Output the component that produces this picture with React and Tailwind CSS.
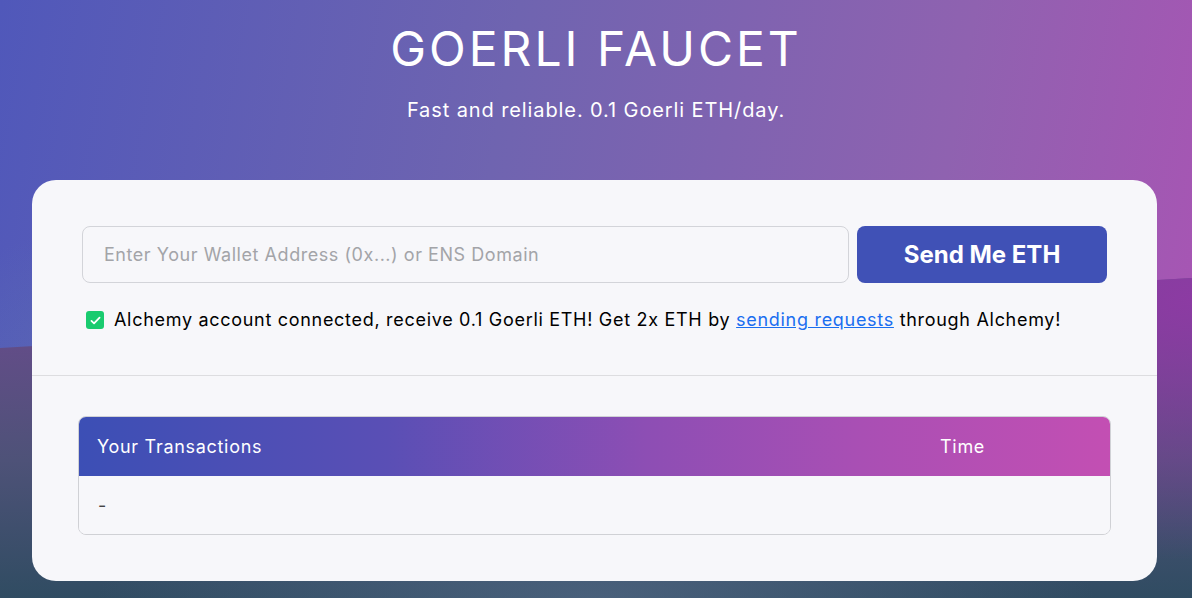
import React, { useState } from 'react';

const font = { fontFamily: 'Inter, "Noto Sans", Arial, sans-serif' };

const CheckIcon = () => (
  <span className="flex h-[18px] w-[18px] items-center justify-center rounded-[3px] bg-[#19cb6f]">
    <svg viewBox="0 0 16 16" className="h-[13px] w-[13px]" fill="none" stroke="white" strokeWidth="2.2" strokeLinecap="round" strokeLinejoin="round">
      <path d="M3 8.5l3.2 3L13 4.5" />
    </svg>
  </span>
);

const App = () => {
  const [address, setAddress] = useState('');

  return (
    <div
      className="relative min-h-screen overflow-hidden bg-[linear-gradient(100deg,#5058ba_0%,#6f64b0_40%,#8f62b0_75%,#ab53b4_100%)]"
      style={font}
    >
      {/* soft lighter glow behind the header */}
      <div className="pointer-events-none absolute inset-0 bg-[radial-gradient(ellipse_60%_45%_at_30%_62%,rgba(96,130,170,0.55),transparent_70%)]" />
      {/* lower wave layer */}
      <div className="pointer-events-none absolute inset-0 [clip-path:polygon(0_348px,100%_278px,100%_100%,0_100%)] bg-[linear-gradient(180deg,#6d4a90_280px,#4e5278_460px,#304c62_598px)]" />
      <div className="pointer-events-none absolute inset-0 [clip-path:polygon(0_348px,100%_278px,100%_100%,0_100%)] bg-[radial-gradient(ellipse_420px_260px_at_100%_300px,rgba(142,58,164,0.95),rgba(142,58,164,0)_100%)]" />
      <div className="pointer-events-none absolute inset-0 [clip-path:polygon(0_348px,100%_278px,100%_100%,0_100%)] bg-[radial-gradient(ellipse_500px_120px_at_50%_600px,rgba(90,110,140,0.6),rgba(90,110,140,0)_100%)]" />

      <div className="relative flex flex-col">
        <h1 className="mt-[20px] text-center text-[48px] font-normal leading-[58px] tracking-[3px] text-white">
          GOERLI FAUCET
        </h1>
        <p className="mt-[18px] text-center text-[20px] leading-[28px] tracking-[0.9px] text-white">
          Fast and reliable. 0.1 Goerli ETH/day.
        </p>

        <div className="ml-[32px] mt-[56px] w-[1125px] rounded-[24px] bg-[#f7f7fa]">
          <div className="px-[50px] pt-[46px] pb-[43px]">
            <div className="flex gap-[8px]">
              <input
                value={address}
                onChange={(e) => setAddress(e.target.value)}
                placeholder="Enter Your Wallet Address (0x...) or ENS Domain"
                className="h-[57px] flex-1 rounded-[8px] border border-[#d3d4d9] bg-[#f7f7fa] px-[21px] text-[18px] tracking-[0.55px] text-gray-800 outline-none placeholder:text-[#a3a4a8]"
                style={font}
              />
              <button className="h-[57px] w-[250px] rounded-[8px] bg-[#4051b6] text-[24px] font-bold text-white">
                Send Me ETH
              </button>
            </div>
            <div className="mt-[25px] flex items-center gap-[10px] pl-[4px]">
              <CheckIcon />
              <span className="text-[18px] leading-[24px] tracking-[0.7px] text-black">
                Alchemy account connected, receive 0.1 Goerli ETH! Get 2x ETH by{' '}
                <a href="#" className="text-[#1a6ef0] underline">sending requests</a>{' '}
                through Alchemy!
              </span>
            </div>
          </div>

          <div className="h-px bg-[#dddde0]" />

          <div className="px-[46px] pt-[40px] pb-[46px]">
            <div className="overflow-hidden rounded-[8px] border border-[#d0d1d5]">
              <div className="grid h-[59px] grid-cols-[843px_1fr] items-center bg-[linear-gradient(90deg,#3c4fb5_0%,#5a4fb5_30%,#8d4eb4_55%,#a84fb4_75%,#c34fb3_100%)] text-[18px] tracking-[0.7px] text-white">
                <div className="px-[18px]">Your Transactions</div>
                <div className="px-[18px]">Time</div>
              </div>
              <div className="grid h-[58px] grid-cols-[843px_1fr] items-center bg-[#f7f7fa] text-[18px] text-[#444]">
                <div className="px-[19px]">-</div>
                <div className="px-[18px]" />
              </div>
            </div>
          </div>
        </div>
        <div className="h-[40px]" />
      </div>
    </div>
  );
};

export default App;
